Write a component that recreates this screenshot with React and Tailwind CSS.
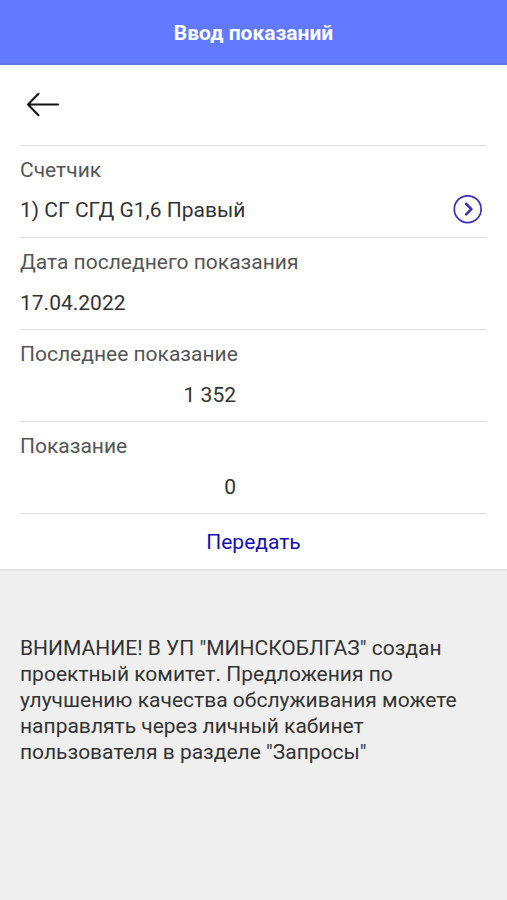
import { useState } from 'react';

function Row({ children }) {
  return <div className="flex flex-col border-t border-[#e0e0e0] pt-2">{children}</div>;
}

function Field({ id, label, numeric, ...props }) {
  return (
    <Row>
      <label htmlFor={id} className="h-8 leading-8 text-[#555]">
        {label}
      </label>
      <input
        id={id}
        className={
          numeric
            ? 'mt-2 mb-[9px] h-[34px] w-54 bg-transparent text-right outline-none'
            : 'mt-2 mb-[9px] h-[34px] w-full bg-transparent outline-none'
        }
        {...props}
      />
    </Row>
  );
}

export default function App() {
  const [value, setValue] = useState('0');

  return (
    <div className="min-h-screen bg-[#efefef] font-['Roboto',sans-serif] text-[21px] text-[#333]">
      <header className="flex h-[65px] items-center justify-center border-b-2 border-[#5f74e6] bg-[#6079ff] pt-1">
        <h1 className="font-bold text-white">Ввод показаний</h1>
      </header>

      <main className="border-b-2 border-[#e4e4e4] bg-white px-5">
        <div className="flex h-20 items-center">
          <button type="button" aria-label="Назад" className="ml-1">
            <svg
              width="36"
              height="28"
              viewBox="0 0 36 28"
              fill="none"
              stroke="#111"
              strokeWidth="2"
              strokeLinecap="round"
              strokeLinejoin="round"
            >
              <path d="M34 13.5H4M14.5 2.8L4 13.5L14.5 24.2" />
            </svg>
          </button>
        </div>

        <Row>
          <span className="h-8 leading-8 text-[#555]">Счетчик</span>
          <div className="mt-2 mb-[9px] flex h-[34px] items-center justify-between">
            <span>1) СГ СГД G1,6 Правый</span>
            <button type="button" aria-label="Выбрать счетчик" className="mr-[3px]">
              <svg width="32" height="32" viewBox="0 0 32 32" fill="none" stroke="#3a30b8">
                <circle cx="15.7" cy="14.2" r="13.4" strokeWidth="1.7" />
                <path
                  d="M14.2 9L19.4 14.2L14.2 19.4"
                  strokeWidth="2.6"
                  strokeLinecap="round"
                  strokeLinejoin="round"
                />
              </svg>
            </button>
          </div>
        </Row>
        <Field id="date" label="Дата последнего показания" value="17.04.2022" readOnly />
        <Field id="last" label="Последнее показание" value="1 352" numeric readOnly />
        <Field
          id="reading"
          label="Показание"
          value={value}
          onChange={(e) => setValue(e.target.value)}
          inputMode="numeric"
          numeric
        />
        <button type="submit" className="h-14 w-full border-t border-[#e0e0e0] pt-0.5 text-[#1410b4]">
          Передать
        </button>
      </main>

      <p className="px-5 pt-16 leading-[26px]">
        ВНИМАНИЕ! В УП "МИНСКОБЛГАЗ" создан проектный комитет. Предложения по улучшению качества
        обслуживания можете направлять через личный кабинет пользователя в разделе "Запросы"
      </p>
    </div>
  );
}
